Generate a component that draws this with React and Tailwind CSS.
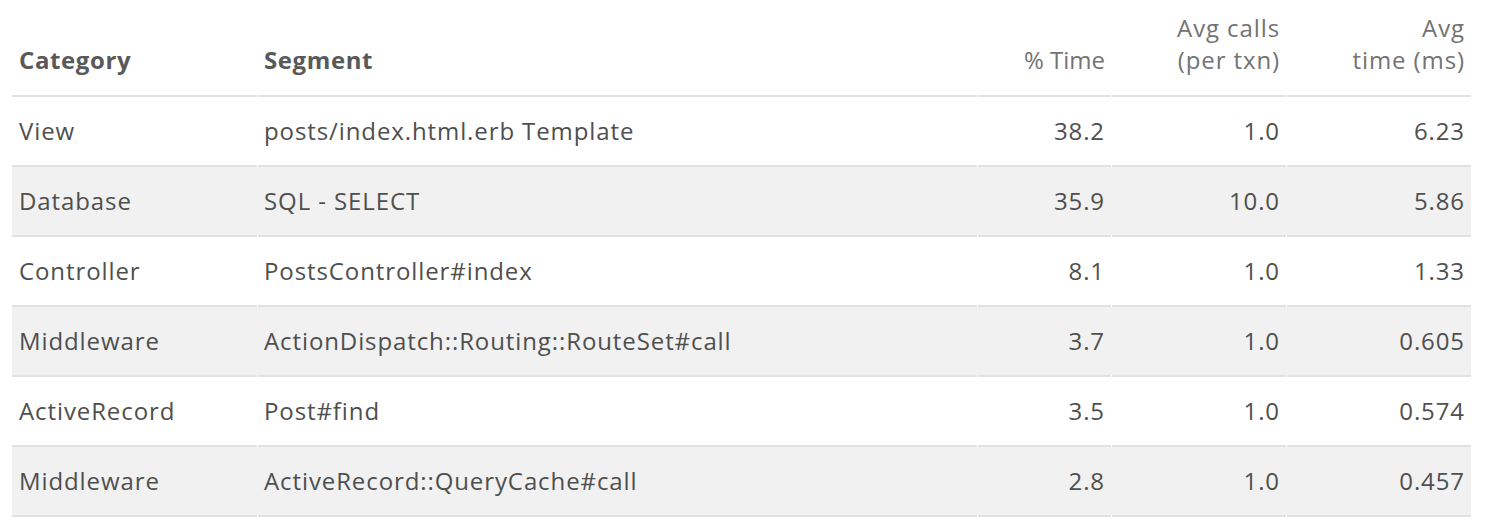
import React from "react";

const rows = [
  { category: "View", segment: "posts/index.html.erb Template", pct: "38.2", calls: "1.0", time: "6.23" },
  { category: "Database", segment: "SQL - SELECT", pct: "35.9", calls: "10.0", time: "5.86" },
  { category: "Controller", segment: "PostsController#index", pct: "8.1", calls: "1.0", time: "1.33" },
  { category: "Middleware", segment: "ActionDispatch::Routing::RouteSet#call", pct: "3.7", calls: "1.0", time: "0.605" },
  { category: "ActiveRecord", segment: "Post#find", pct: "3.5", calls: "1.0", time: "0.574" },
  { category: "Middleware", segment: "ActiveRecord::QueryCache#call", pct: "2.8", calls: "1.0", time: "0.457" },
];

// white notch in the bottom border where two cells meet
const cell =
  "relative border-b-2 border-[#e1e1e1] pl-[7px] pr-[7px] after:absolute after:left-0 after:bottom-[-2px] after:h-[2px] after:w-px after:bg-white first:after:hidden";

function App() {
  return (
    <div className="bg-white px-3 font-['Open_Sans',sans-serif] text-[24px] tracking-[0.9px] text-[#4f4f4f]">
      <table className="w-[1459px] table-fixed border-separate border-spacing-0">
        <colgroup>
          <col className="w-[245px]" />
          <col className="w-[720px]" />
          <col className="w-[134px]" />
          <col className="w-[175px]" />
          <col className="w-[185px]" />
        </colgroup>
        <thead>
          <tr className="h-[97px] align-bottom leading-[32px] text-[#595959]">
            <th className={`${cell} pb-[19px] text-left font-bold tracking-[0.6px]`}>Category</th>
            <th className={`${cell} pb-[19px] text-left font-bold tracking-[0.6px]`}>Segment</th>
            <th className={`${cell} pb-[19px] !pr-[6px] text-right font-normal tracking-normal text-[#737373]`}>% Time</th>
            <th className={`${cell} pb-[19px] !pr-[6px] text-right font-normal text-[#737373]`}>
              Avg calls
              <br />
              (per txn)
            </th>
            <th className={`${cell} pb-[19px] !pr-[6px] text-right font-normal text-[#737373]`}>
              Avg
              <br />
              time (ms)
            </th>
          </tr>
        </thead>
        <tbody>
          {rows.map((r, i) => (
            <tr key={i} className={`h-[70px] ${i % 2 === 1 ? "bg-[#f1f1f1]" : ""}`}>
              <td className={cell}>{r.category}</td>
              <td className={cell}>{r.segment}</td>
              <td className={`${cell} !pr-[6px] text-right`}>{r.pct}</td>
              <td className={`${cell} !pr-[6px] text-right`}>{r.calls}</td>
              <td className={`${cell} !pr-[6px] text-right`}>{r.time}</td>
            </tr>
          ))}
        </tbody>
      </table>
    </div>
  );
}

export default App;
